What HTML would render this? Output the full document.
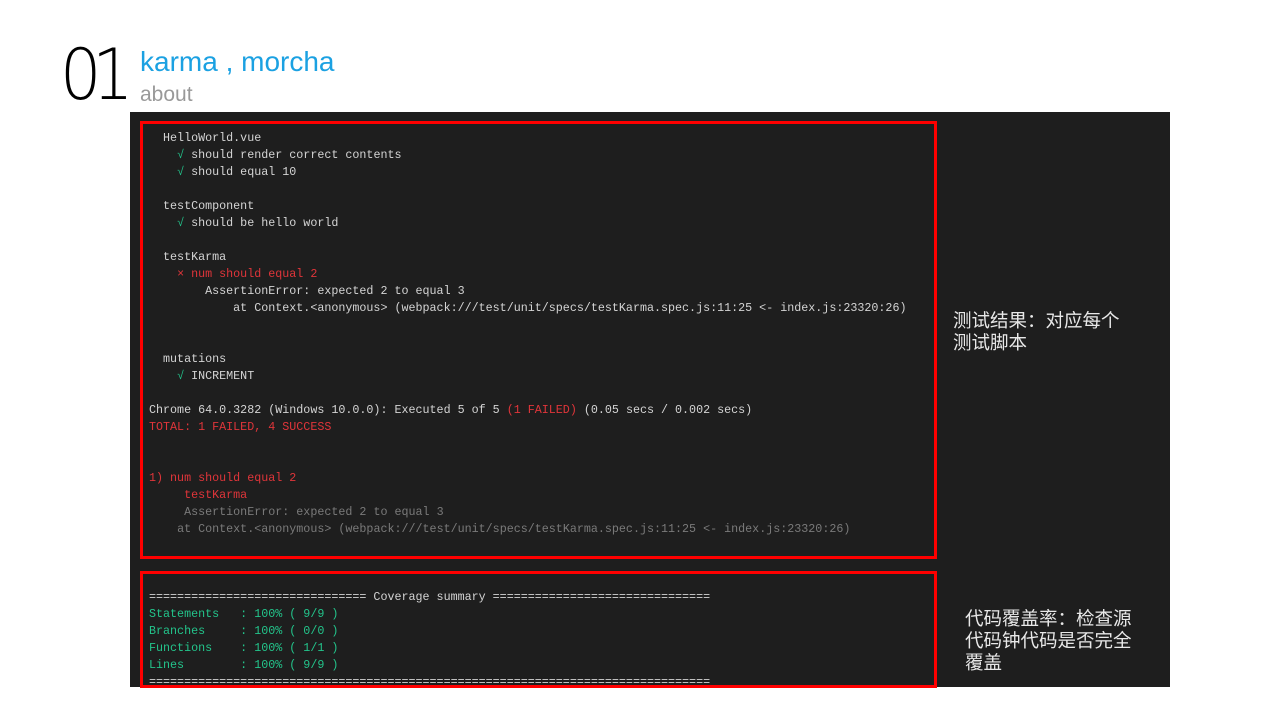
<!DOCTYPE html>
<html><head><meta charset="utf-8"><style>
*{margin:0;padding:0;box-sizing:border-box}
body{width:1280px;height:720px;background:#fff;position:relative;overflow:hidden;font-family:"Liberation Sans","Noto Sans CJK SC",sans-serif}
.num{position:absolute;left:60px;top:37px;font-family:"DejaVu Sans ExtraLight","DejaVu Sans","Liberation Sans",sans-serif;font-weight:200;font-size:70px;line-height:76px;color:#000;letter-spacing:-10px;transform:scaleX(0.93);transform-origin:left}
.t1{position:absolute;left:140px;top:45px;font-size:28px;line-height:34px;color:#1ba1e2}
.t2{position:absolute;left:140px;top:82px;font-size:21px;line-height:26px;color:#999}
.panel{position:absolute;left:130px;top:112px;width:1040px;height:575px;background:#1e1e1e}
.box{position:absolute;border:3px solid #f00}
pre{position:absolute;left:149px;font-family:"Liberation Mono",monospace;font-size:11.7px;line-height:17px;color:#d4d4d4;white-space:pre}
.g{color:#23c48b}.r{color:#e0353a}.d{color:#7a7a7a}
.note{position:absolute;color:#e8e8e8;font-family:"Noto Sans CJK SC",sans-serif;font-size:18.5px;line-height:22px}
</style></head><body>
<div class="num">01</div>
<div class="t1">karma , morcha</div>
<div class="t2">about</div>
<div class="panel"></div>
<div class="box" style="left:140px;top:121px;width:797px;height:438px"></div>
<div class="box" style="left:140px;top:571px;width:797px;height:117px"></div>
<pre style="top:130px">  HelloWorld.vue
    <span class="g">√</span> should render correct contents
    <span class="g">√</span> should equal 10

  testComponent
    <span class="g">√</span> should be hello world

  testKarma
    <span class="r">× num should equal 2</span>
        AssertionError: expected 2 to equal 3
            at Context.&lt;anonymous&gt; (webpack:///test/unit/specs/testKarma.spec.js:11:25 &lt;- index.js:23320:26)


  mutations
    <span class="g">√</span> INCREMENT

Chrome 64.0.3282 (Windows 10.0.0): Executed 5 of 5 <span class="r">(1 FAILED)</span> (0.05 secs / 0.002 secs)
<span class="r">TOTAL: 1 FAILED, 4 SUCCESS</span>


<span class="r">1) num should equal 2</span>
     <span class="r">testKarma</span>
     <span class="d">AssertionError: expected 2 to equal 3</span>
    <span class="d">at Context.&lt;anonymous&gt; (webpack:///test/unit/specs/testKarma.spec.js:11:25 &lt;- index.js:23320:26)</span></pre>
<pre style="top:589px">=============================== Coverage summary ===============================
<span class="g">Statements   : 100% ( 9/9 )</span>
<span class="g">Branches     : 100% ( 0/0 )</span>
<span class="g">Functions    : 100% ( 1/1 )</span>
<span class="g">Lines        : 100% ( 9/9 )</span>
================================================================================</pre>
<div class="note" style="left:953px;top:309px">测试结果：对应每个<br>测试脚本</div>
<div class="note" style="left:965px;top:607px">代码覆盖率：检查源<br>代码钟代码是否完全<br>覆盖</div>
</body></html>
